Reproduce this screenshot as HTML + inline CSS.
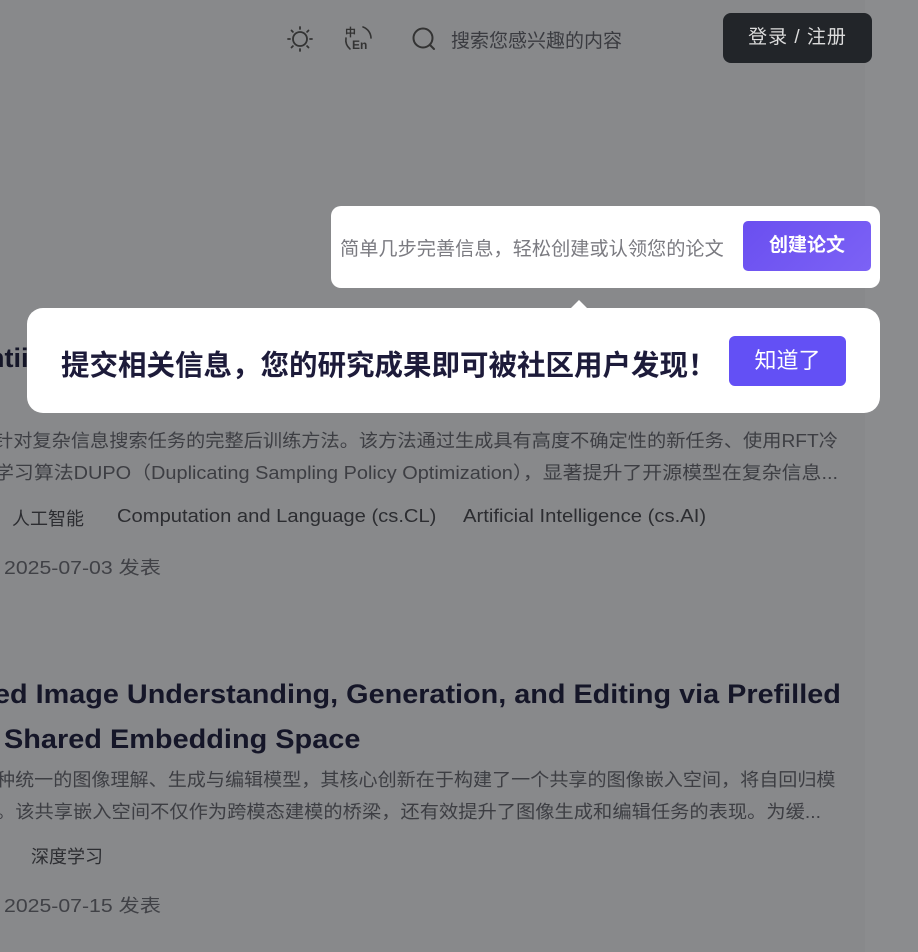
<!DOCTYPE html>
<html><head><meta charset="utf-8"><style>
*{margin:0;padding:0;box-sizing:border-box}
body{width:918px;height:952px;overflow:hidden;background:#88898b;font-family:"Liberation Sans","Noto Sans CJK SC",sans-serif;position:relative}
.a{position:absolute;white-space:nowrap;transform-origin:0 50%}
.body{color:#3d3e43;font-size:18px}
.title{color:#151628;font-size:27px;font-weight:bold}
</style></head><body>
<div class="a" style="left:865px;top:0;width:53px;height:952px;background:#8b8c8e"></div>
<!-- header -->
<svg class="a" style="left:285px;top:24px" width="30" height="30" viewBox="0 0 30 30" fill="none" stroke="#333" stroke-width="1.8" stroke-linecap="round">
<circle cx="15" cy="15" r="7"/><path d="M15 3v2M15 25v2M3 15h2M25 15h2M6.5 6.5l1.4 1.4M22.1 22.1l1.4 1.4M6.5 23.5l1.4-1.4M22.1 7.9l1.4-1.4"/></svg>
<svg class="a" style="left:340px;top:20px" width="40" height="40" viewBox="0 0 40 40" fill="none" stroke="#333" stroke-width="1.6" stroke-linecap="round">
<path d="M23 7a12 12 0 0 1 8 11M6 18a12 12 0 0 0 4 11"/></svg>
<div class="a" style="left:345px;top:24px;font-size:11px;font-weight:bold;color:#333">中</div>
<div class="a" style="left:352px;top:38px;font-size:12px;font-weight:bold;color:#333">En</div>
<svg class="a" style="left:410px;top:25px" width="28" height="28" viewBox="0 0 28 28" fill="none" stroke="#333" stroke-width="2" stroke-linecap="round">
<circle cx="13" cy="13" r="9.5"/><path d="M20 20l4 4"/></svg>
<div class="a" style="left:451px;top:26px;font-size:19px;color:#3a3b40">搜索您感兴趣的内容</div>
<div class="a" style="left:723px;top:13px;width:149px;height:50px;background:#222529;border-radius:8px;color:#dcdcdc;font-size:19px;letter-spacing:1px;text-align:center;line-height:50px">登录 / 注册</div>
<!-- bg content -->
<div class="a title" style="left:-12px;top:343px">ntii</div>
<div class="a body" style="left:-6px;top:427px;transform:scaleX(1.067)">针对复杂信息搜索任务的完整后训练方法。该方法通过生成具有高度不确定性的新任务、使用RFT冷</div>
<div class="a body" style="left:-6px;top:459px;transform:scaleX(1.106)">学习算法DUPO（Duplicating Sampling Policy Optimization），显著提升了开源模型在复杂信息...</div>
<div class="a body" style="left:12px;top:505px;color:#2c2d31">人工智能</div>
<div class="a body" style="left:117px;top:506px;color:#2c2d31;transform:scaleX(1.12)">Computation and Language (cs.CL)</div>
<div class="a body" style="left:463px;top:506px;color:#2c2d31;transform:scaleX(1.125)">Artificial Intelligence (cs.AI)</div>
<div class="a body" style="left:4px;top:554px;color:#404146;transform:scaleX(1.18)">2025-07-03 发表</div>
<div class="a title" style="left:-6px;top:679px;transform:scaleX(1.067)">ed Image Understanding, Generation, and Editing via Prefilled</div>
<div class="a title" style="left:4px;top:724px;transform:scaleX(1.07)">Shared Embedding Space</div>
<div class="a body" style="left:-4px;top:766px;transform:scaleX(1.06)">种统一的图像理解、生成与编辑模型，其核心创新在于构建了一个共享的图像嵌入空间，将自回归模</div>
<div class="a body" style="left:-4px;top:798px;transform:scaleX(1.07)">。该共享嵌入空间不仅作为跨模态建模的桥梁，还有效提升了图像生成和编辑任务的表现。为缓...</div>
<div class="a body" style="left:31px;top:843px;color:#2c2d31">深度学习</div>
<div class="a body" style="left:4px;top:892px;color:#404146;transform:scaleX(1.18)">2025-07-15 发表</div>
<!-- popover 1 -->
<div class="a" style="left:331px;top:206px;width:549px;height:82px;background:#fff;border-radius:10px"></div>
<div class="a" style="left:340px;top:234px;font-size:19px;color:#7a7a80;transform:scaleX(1.01)">简单几步完善信息，轻松创建或认领您的论文</div>
<div class="a" style="left:743px;top:221px;width:128px;height:50px;border-radius:5px;background:linear-gradient(135deg,#6a4ff0,#7c62f5);color:#fff;font-size:19px;font-weight:bold;text-align:center;line-height:50px">创建论文</div>
<!-- popover 2 -->
<div class="a" style="left:570px;top:300px;width:0;height:0;border-left:9px solid transparent;border-right:9px solid transparent;border-bottom:9px solid #fff"></div>
<div class="a" style="left:27px;top:308px;width:853px;height:105px;background:#fff;border-radius:16px"></div>
<div class="a" style="left:61px;top:343px;font-size:28.5px;font-weight:bold;color:#1d1b3a">提交相关信息，您的研究成果即可被社区用户发现！</div>
<div class="a" style="left:729px;top:336px;width:117px;height:50px;border-radius:6px;background:#6350f5;color:#fff;font-size:22px;text-align:center;line-height:50px">知道了</div>
</body></html>
